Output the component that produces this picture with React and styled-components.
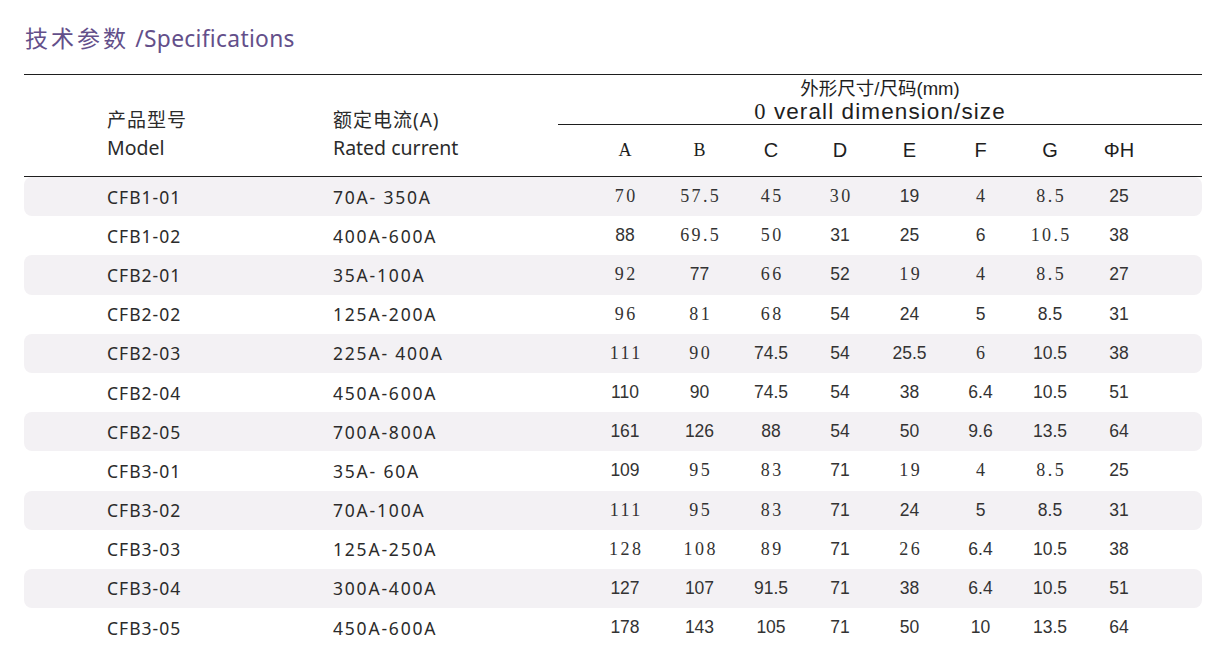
// Packages
import React from "react"
import styled, { createGlobalStyle } from "styled-components"

// Styles
const GlobalStyle = createGlobalStyle`
    html, body {
        margin: 0;
        padding: 0;
        background: #ffffff;
    }

    body {
        font-family: "Noto Sans", "Noto Sans CJK SC", sans-serif;
        color: #2b2b2b;
    }
`

const SANS = `"Noto Sans", "Noto Sans CJK SC", sans-serif`
const ARIAL = `"Liberation Sans", "Noto Sans CJK SC", sans-serif`
const SERIF = `"Liberation Serif", "Noto Sans CJK SC", serif`

const COLS = "309px 225px 29px 76px 73px 70px 68px 71px 71px 68px 70px 48px"

const Page = styled.div`
    width: 1218px;
    height: 651px;
    overflow: hidden;
    padding: 0 16px 0 24px;
    box-sizing: border-box;
`

const Title = styled.h2`
    margin: 18px 0 16px 1px;
    height: 40px;
    line-height: 40px;
    font-family: ${SANS};
    font-weight: 400;
    font-size: 22.8px;
    color: #634f8a;
    letter-spacing: 0.3px;
    white-space: pre;

    span {
        font-size: 23px;
        letter-spacing: 3px;
    }
`

const Table = styled.div`
    border-top: 1px solid #1e1e1e;
`

const Head = styled.div`
    display: grid;
    grid-template-columns: ${COLS};
    grid-template-rows: 50px 50px;
    border-bottom: 1px solid #1e1e1e;
    height: 101px;
`

const HeadLabel = styled.div`
    grid-row: 1 / 3;
    padding: 31px 0 0 ${props => props.$indent}px;
    font-family: ${SANS};
    font-size: 19.5px;
    line-height: 28px;
    color: #2b2b2b;

    div:first-child {
        font-size: 19px;
        letter-spacing: 1px;
    }
`

const Group = styled.div`
    grid-column: 3 / 13;
    grid-row: 1;
    border-bottom: 1px solid #1e1e1e;
    display: flex;
    flex-direction: column;
    align-items: center;
`

const GroupCn = styled.div`
    margin-top: 2px;
    font-family: ${ARIAL};
    font-size: 18.5px;
    line-height: 24px;
    color: #1e1e1e;
`

const GroupEn = styled.div`
    font-family: ${ARIAL};
    font-size: 22.5px;
    line-height: 22px;
    color: #1e1e1e;
    letter-spacing: 1.1px;

    b {
        font-family: ${SERIF};
        font-weight: 400;
    }
`

const Letter = styled.div`
    grid-row: 2;
    grid-column: ${props => props.$col};
    display: flex;
    align-items: center;
    justify-content: center;
    font-family: ${props => (props.$serif ? SERIF : ARIAL)};
    font-size: ${props => (props.$serif ? "18px" : "20px")};
    color: #1e1e1e;
`

const Row = styled.div`
    display: grid;
    grid-template-columns: ${COLS};
    height: 39.2px;
    align-items: center;
    background: ${props => (props.$alt ? "#f3f1f4" : "transparent")};
    border-radius: 8px;
`

const Text = styled.div`
    padding-left: ${props => props.$indent}px;
    font-family: ${SANS};
    font-size: 17.5px;
    letter-spacing: ${props => props.$spacing}px;
    color: #2b2b2b;
    white-space: pre;
`

const Num = styled.div`
    grid-column: ${props => props.$col};
    text-align: center;
    white-space: pre;
    font-family: ${props => (props.$serif ? SERIF : ARIAL)};
    font-size: ${props => (props.$serif ? "18px" : "17.5px")};
    letter-spacing: ${props => (props.$serif ? "2.4px" : "0")};
    text-indent: ${props => (props.$serif ? "2.4px" : "0")};
    color: #333333;
`

// Data — "~" marks values printed in the serif face
const rows = [
    ["CFB1-01", "70A- 350A", "~70 ~57.5 ~45 ~30 19 ~4 ~8.5 25"],
    ["CFB1-02", "400A-600A", "88 ~69.5 ~50 31 25 6 ~10.5 38"],
    ["CFB2-01", "35A-100A", "~92 77 ~66 52 ~19 ~4 ~8.5 27"],
    ["CFB2-02", "125A-200A", "~96 ~81 ~68 54 24 5 8.5 31"],
    ["CFB2-03", "225A- 400A", "~111 ~90 74.5 54 25.5 ~6 10.5 38"],
    ["CFB2-04", "450A-600A", "110 90 74.5 54 38 6.4 10.5 51"],
    ["CFB2-05", "700A-800A", "161 126 88 54 50 9.6 13.5 64"],
    ["CFB3-01", "35A- 60A", "109 ~95 ~83 71 ~19 ~4 ~8.5 25"],
    ["CFB3-02", "70A-100A", "~111 ~95 ~83 71 24 5 8.5 31"],
    ["CFB3-03", "125A-250A", "~128 ~108 ~89 71 ~26 6.4 10.5 38"],
    ["CFB3-04", "300A-400A", "127 107 91.5 71 38 6.4 10.5 51"],
    ["CFB3-05", "450A-600A", "178 143 105 71 50 10 13.5 64"],
]

const letters = ["~A", "~B", "C", "D", "E", "F", "G", "ΦH"]

function App() {
    return (
        <Page>
            <GlobalStyle />
            <Title>
                <span>技术参数</span> /Specifications
            </Title>

            <Table>
                <Head>
                    <HeadLabel $indent={83}>
                        <div>产品型号</div>
                        <div>Model</div>
                    </HeadLabel>
                    <HeadLabel $indent={0}>
                        <div>额定电流(A)</div>
                        <div>Rated current</div>
                    </HeadLabel>

                    <Group>
                        <GroupCn>外形尺寸/尺码(mm)</GroupCn>
                        <GroupEn>
                            <b>0</b> verall dimension/size
                        </GroupEn>
                    </Group>

                    {letters.map((l, i) => (
                        <Letter key={l} $col={i + 4} $serif={l[0] === "~"}>
                            {l.replace("~", "")}
                        </Letter>
                    ))}
                </Head>

                {rows.map(([model, current, values], r) => (
                    <Row key={model} $alt={r % 2 === 0}>
                        <Text $indent={83} $spacing={1}>
                            {model}
                        </Text>
                        <Text $indent={0} $spacing={1.8}>
                            {current}
                        </Text>
                        {values.split(" ").map((v, i) => (
                            <Num key={i} $col={i + 4} $serif={v[0] === "~"}>
                                {v.replace("~", "")}
                            </Num>
                        ))}
                    </Row>
                ))}
            </Table>
        </Page>
    )
}

export default App
